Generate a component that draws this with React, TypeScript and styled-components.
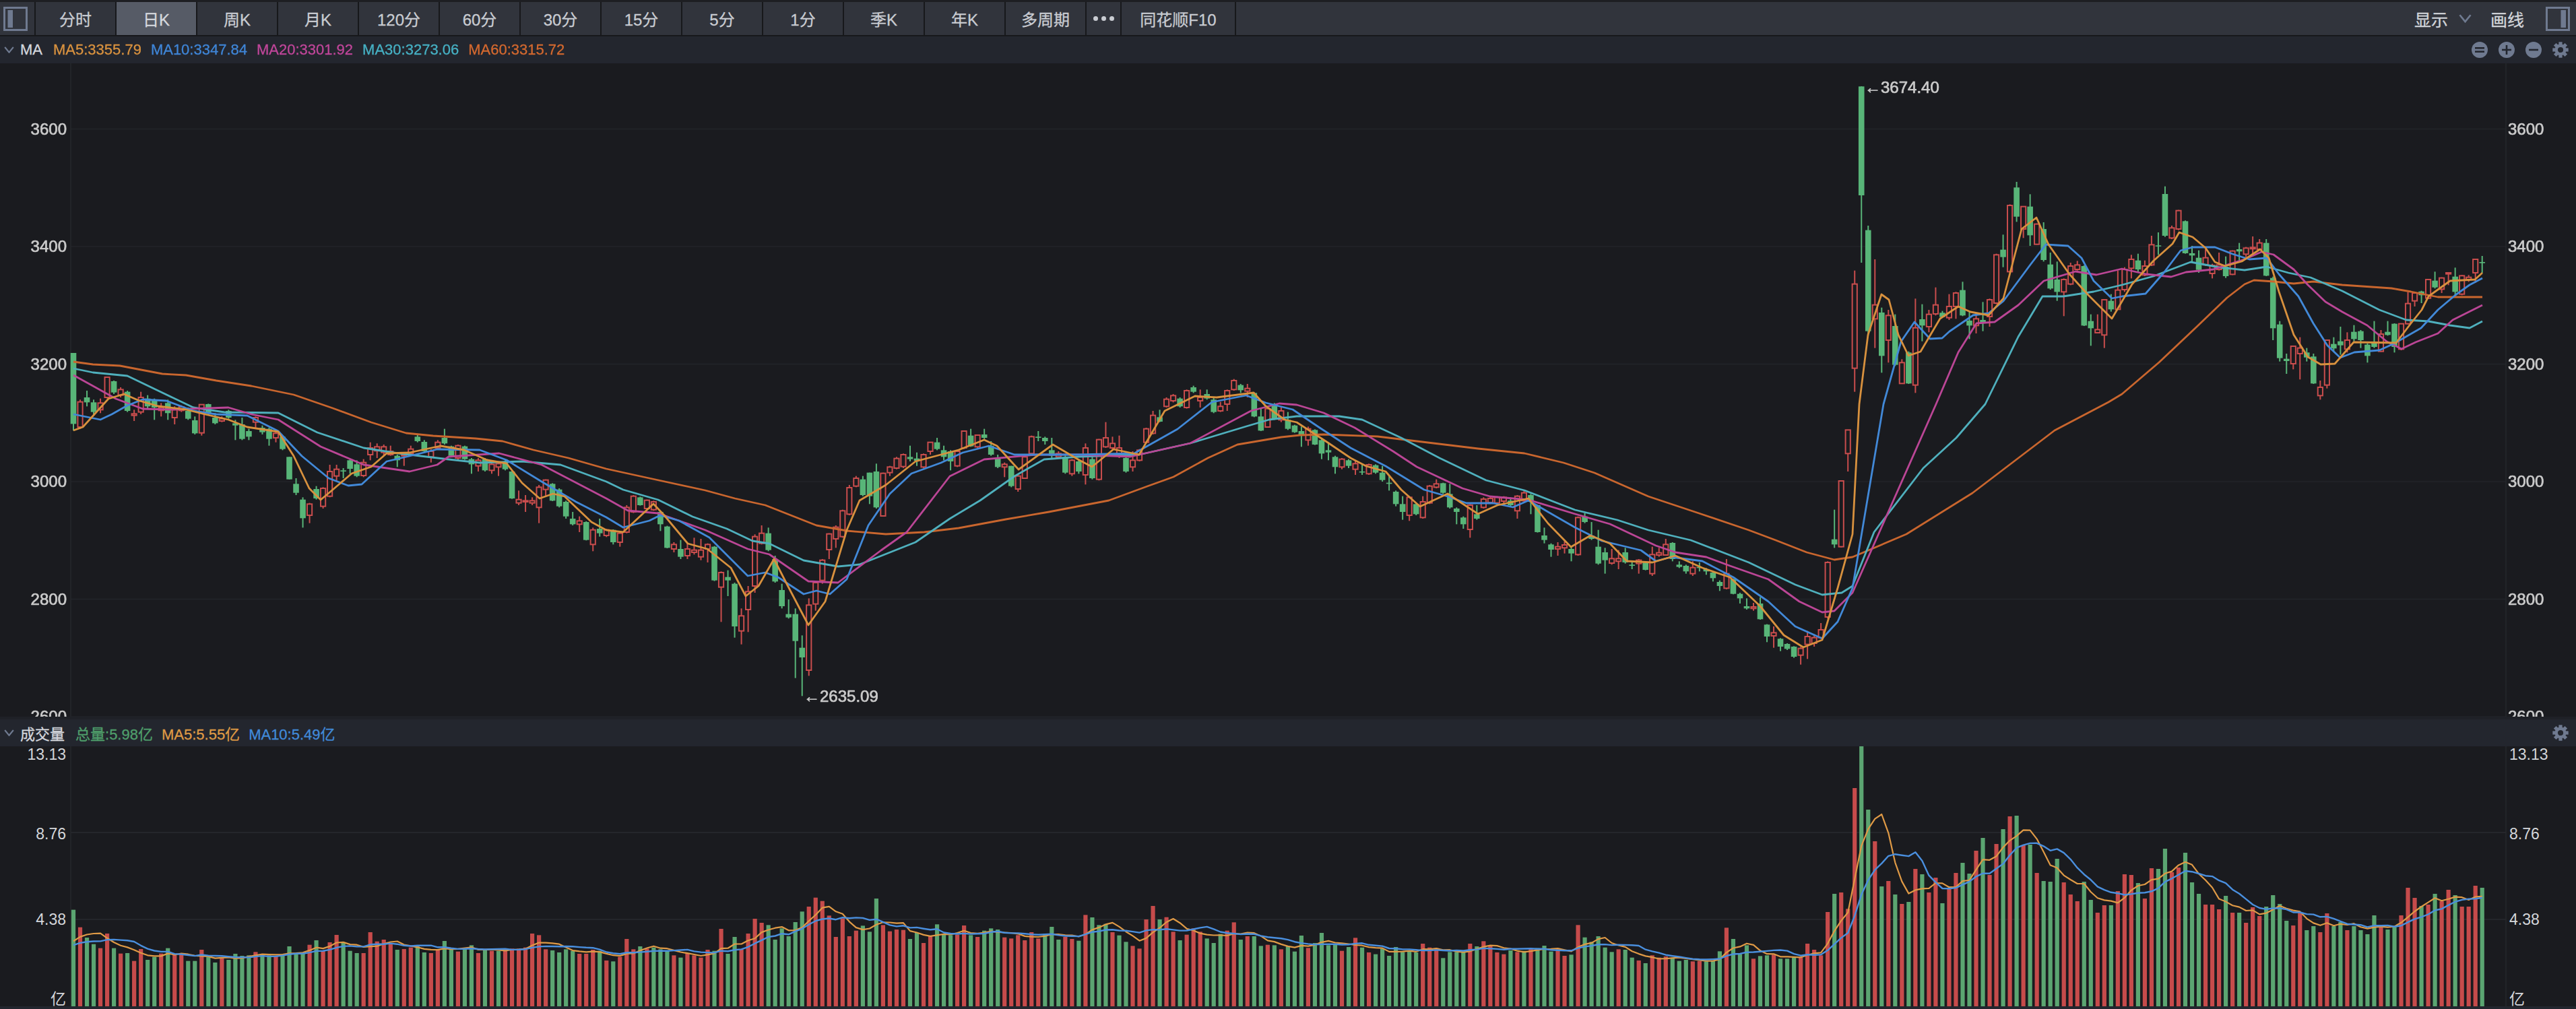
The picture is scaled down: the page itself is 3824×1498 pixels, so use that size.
import React from "react";
import styled, { createGlobalStyle } from "styled-components";

const FONT = `"Liberation Sans", "Noto Sans CJK SC", sans-serif`;
const BG = "#1a1b1f";
const BAR = "#23262e";
const ICON = "#6f7a90";

const RED = "#c94d4d";
const GREEN = "#58b578";
const VOL_RED = "#c64b4b";
const VOL_GREEN = "#5ba571";

// candles, read group by group: [up, bodyTop, bodyBottom, wickTop, wickBottom]
type Row = number[];
const group = (offset: number, rows: Row[]) =>
  rows.map(([up, t, b, wt, wb]) => ({
    up: up === 1,
    top: offset + t / 3,
    bottom: offset + b / 3,
    high: offset + wt / 3,
    low: offset + wb / 3,
  }));

const candles = [
  ...group(480, [
    [0,132,448,132,478],[1,350,462,340,470],[0,330,352,300,370],[0,352,395,340,410],[1,355,385,335,400],
    [1,240,330,240,335],[0,258,308,255,315],[1,295,320,285,330],[0,305,390,300,395],[1,403,410,385,435],
    [1,330,395,305,405],[0,335,370,320,380],[0,345,375,335,430],[1,375,388,355,415],[0,355,400,340,430],
    [1,385,420,370,450],[1,372,388,365,395],[0,390,425,375,430],[0,432,490,415,495],[1,362,488,360,500],
    [0,360,400,358,405],[0,420,445,400,450],[1,425,435,415,440],[0,390,420,385,425],[0,445,455,430,520],
    [0,450,515,420,520],[0,480,505,470,520],[1,420,440,415,470],[0,465,485,455,495],[0,470,515,465,545],
    [1,490,510,480,530],[0,505,560,500,565],[0,595,695,595,695],[0,715,755,690,765],[0,785,868,775,910],
    [1,805,855,800,890],[0,738,780,725,785],[1,735,815,730,825],[1,660,770,630,775],[1,650,680,630,700],
    [0,655,660,645,690],[0,610,648,605,670],[0,628,680,610,685],[1,620,678,605,685],[1,555,585,530,610],
    [1,550,568,535,600],[1,550,575,540,590],[1,570,585,545,590],[0,590,610,585,640],[1,585,590,580,635],
    [1,560,580,545,590],[0,505,525,495,530],[0,528,570,520,575],[1,570,595,560,620],[1,530,555,520,560],
    [0,510,535,470,540],[0,548,590,545,592],[1,545,600,540,610],[0,548,605,545,608],[0,605,628,600,670],
    [1,610,635,600,660],[0,605,655,600,660],[1,628,655,615,670],[1,625,640,620,680],[0,620,650,610,655],
    [0,660,780,658,782],[1,785,800,745,810],[1,790,795,765,840],[1,790,800,775,810],[1,730,820,720,890],
    [1,698,740,695,770],[0,715,790,712,792],[0,740,815,735,820],[0,795,860,790,870],[0,870,895,840,900],
    [1,880,895,860,930],[0,885,965,882,967],[1,920,985,910,1015],[0,915,935,870,950],
  ]),
  ...group(560, [
    [1,680,705,675,712],[0,680,735,678,745],[1,695,735,690,755],[1,580,690,570,695],[1,530,600,525,605],
    [0,535,570,532,572],[1,548,585,545,590],[1,555,590,550,595],[0,600,655,595,685],[0,665,760,662,762],
    [1,745,765,735,780],[0,765,800,725,810],[1,765,795,740,810],[1,770,780,715,790],[1,770,800,720,815],
    [1,745,765,740,825],[0,755,905,752,908],[1,870,935,865,1090],[0,890,905,860,975],[0,920,1110,915,1160],
    [1,1063,1130,1030,1190],[1,955,1035,930,1135],[1,710,930,700,960],[1,695,740,660,745],[0,695,770,670,775],
    [0,810,910,795,915],[0,948,1020,920,1030],[0,1055,1070,990,1075],[0,1055,1175,1030,1340],[0,1205,1248,1150,1420],
    [1,1015,1305,985,1330],[1,915,1010,910,1040],[1,815,905,810,920],[1,698,768,695,810],[1,668,720,660,760],
    [1,595,710,590,715],[1,492,610,480,615],[1,450,485,440,490],[0,455,525,440,530],[0,425,530,425,565],
    [0,420,580,385,585],[1,428,618,425,620],[1,400,425,395,440],[1,362,405,355,410],[1,345,398,340,405],
    [0,355,365,305,375],[0,362,372,335,395],[1,345,400,340,405],[1,290,330,290,345],[0,290,320,270,325],
    [0,325,355,305,370],[0,330,375,325,415],[1,330,395,325,400],[1,240,315,240,320],[0,260,308,230,310],
    [1,258,310,255,315],[0,255,270,230,275],[0,305,345,285,350],[0,358,400,345,405],[1,388,400,380,445],
    [0,395,485,395,490],[1,440,498,435,510],[1,355,450,350,450],[1,265,340,260,345],[0,265,270,240,285],
    [0,270,285,265,300],[0,325,350,270,360],[1,340,355,330,360],[0,355,425,345,430],[1,370,430,365,440],
    [0,375,420,365,430],[1,315,435,295,478],[0,365,450,340,455],[1,278,455,275,460],[1,270,310,200,315],
    [1,295,315,265,325],[1,315,345,260,360],[0,360,420,350,425],[1,370,400,330,420],[1,325,370,320,375],
    [1,230,290,225,295],[1,170,250,150,255],[0,178,198,145,200],[1,98,130,90,135],[1,82,105,75,112],
    [0,95,130,90,135],[1,60,135,55,140],[0,45,65,38,70],[1,90,105,55,135],[0,75,95,55,100],
    [0,100,155,90,160],[1,130,150,110,155],[1,60,120,55,150],[1,15,55,8,60],[0,35,58,30,70],
    [1,50,62,30,90],[0,70,175,68,178],[0,175,238,140,240],[1,140,222,135,225],[0,120,185,115,190],
  ]),
  ...group(540, [
    [1,210,250,195,260],[0,250,290,215,295],[0,275,305,272,308],[0,300,320,280,370],[1,290,340,280,365],
    [0,295,360,292,362],[0,340,400,330,425],[0,385,395,355,430],[0,415,460,410,490],[1,425,460,420,470],
    [0,430,455,425,465],[1,445,470,430,495],[0,480,483,450,495],[1,450,490,445,495],[0,452,485,448,490],
    [0,485,518,455,525],[0,530,535,495,565],[0,570,625,565,635],[0,625,660,590,695],[1,595,675,590,700],
    [0,625,670,620,675],[1,615,685,590,690],[1,545,620,540,625],[1,535,550,515,555],[0,532,575,530,580],
    [0,580,640,535,645],[0,645,660,640,715],[0,685,715,680,735],[1,630,738,625,775],[0,670,690,630,695],
    [1,603,640,595,645],[1,600,618,590,625],[1,595,620,590,625],[1,595,612,590,630],[0,610,630,595,635],
    [1,590,655,585,690],[1,575,610,565,615],[0,585,610,580,670],[0,630,750,628,752],[0,765,785,730,800],
    [0,805,828,800,860],[1,815,825,795,855],[1,807,820,790,845],[0,825,845,810,880],[1,685,850,680,855],
    [0,680,705,665,710],[0,765,780,705,785],[0,815,890,740,895],[0,840,875,820,935],[1,868,888,825,895],
    [1,868,880,830,915],[0,840,885,820,890],[0,895,900,880,915],[1,875,890,870,935],[0,885,918,880,920],
    [1,850,935,815,945],[1,842,852,820,860],[1,805,852,780,855],[0,798,870,795,880],[0,895,905,880,910],
    [0,900,925,895,935],[1,908,935,880,945],[0,905,910,885,925],[0,915,925,910,940],[0,930,955,925,970],
    [0,972,990,965,1012],[1,935,1000,870,1005],[0,960,1025,958,1027],[0,1025,1045,1020,1068],[0,1080,1090,1045,1095],
    [1,1083,1090,1065,1100],[0,1068,1138,1040,1140],[0,1162,1215,1160,1240],[1,1198,1212,1170,1265],[0,1225,1260,1222,1280],
    [0,1248,1270,1245,1275],[0,1260,1305,1258,1310],[1,1268,1298,1262,1340],[1,1215,1250,1190,1315],[1,1220,1245,1205,1260],
    [1,1185,1220,1155,1225],[1,885,1128,880,1135],[0,782,805,650,820],[1,522,815,520,818],[1,295,400,295,480],
  ]),
  ...group(100, [
    [1,965,1340,905,1445],[0,85,570,85,870],[0,725,1175,705,1195],[1,1058,1120,855,1250],[0,1092,1285,1070,1360],
    [1,1105,1215,1080,1315],[0,1152,1325,1100,1330],[1,1315,1408,1300,1410],[0,1270,1408,1265,1410],[1,1160,1415,1030,1450],
    [0,1122,1150,1055,1220],[1,1100,1155,1080,1180],[1,1058,1098,980,1105],[0,1093,1112,1085,1115],[1,1065,1115,1010,1125],
    [1,1005,1065,1000,1120],[0,992,1105,955,1108],[0,1128,1150,1085,1210],[1,1120,1150,1100,1185],[0,1125,1140,1045,1175],
    [1,1035,1110,1030,1155],[1,835,1050,830,1055],[0,812,845,745,890],[1,615,910,610,915],[0,535,665,510,688],
    [1,620,720,618,760],[0,620,748,565,795],[1,698,788,695,790],[0,720,858,690,865],[0,878,985,825,990],
    [0,945,1000,865,1040],[1,945,1000,940,1108],[1,885,965,870,970],[1,880,900,862,905],[0,885,1150,882,1152],
    [0,1130,1162,1100,1240],[1,1168,1182,1100,1185],[1,1035,1192,1032,1250],[0,1040,1078,1010,1088],[1,992,1078,905,1080],
    [1,900,990,890,1000],[1,855,895,835,940],[0,860,900,830,915],[1,885,925,860,930],[1,790,880,750,885],
    [0,793,797,735,835],
  ]),
  ...group(290, [
    [0,-6,180,-40,185],[1,145,190,135,195],[1,68,150,65,155],[0,115,258,112,260],[0,258,268,225,300],
    [0,278,332,245,345],[1,278,310,240,315],[1,312,348,305,370],[1,310,330,255,335],[0,318,360,272,368],
    [1,248,352,245,355],[0,240,250,212,290],[1,235,262,230,275],[1,232,238,183,258],[1,212,240,195,245],
    [0,212,358,195,360],[0,368,592,362,645],[0,575,725,560,740],[0,728,738,705,795],[1,672,750,670,775],
    [1,680,705,632,820],[0,700,722,680,740],[0,718,838,705,840],[1,855,892,825,910],[1,645,845,642,860],
    [0,662,682,632,695],[0,650,668,585,710],[1,645,685,610,700],[0,608,640,578,650],[0,605,645,600,680],
    [0,665,715,660,745],[0,658,675,560,680],[1,618,695,600,697],[0,608,622,560,625],[0,572,675,570,700],
    [1,572,685,570,690],[1,482,572,430,575],[1,435,470,432,495],[0,428,445,425,480],[1,375,458,372,462],
    [0,380,410,340,415],[1,368,418,365,435],[1,345,350,345,400],[0,362,430,322,450],[1,358,440,355,445],
    [1,365,375,355,385],[1,285,345,282,390],[0,297,302,270,345],
  ]),
];

// price moving averages, as read from the chart
const MA_LINES = [
  {
    color: "#c9662e",
    points: "109,537 138,541 178,543 241,555 276,557 321,565 373,573 436,586 494,606 551,627 603,643 643,647 706,651 746,655 792,668 844,680 900,696 964,710 1047,728 1091,740 1136,750 1174,765 1212,780 1257,788 1315,793 1372,790 1423,784 1493,771 1557,760 1646,743 1703,722 1742,708 1793,680 1837,660 1902,649 1930,646 1965,645 2045,648 2103,655 2194,666 2263,673 2321,687 2367,702 2447,737 2522,762 2596,787 2636,802 2682,820 2723,831 2750,827 2830,793 2928,732 3050,639 3130,597 3150,585 3205,538 3259,487 3306,442 3332,422 3346,416 3375,418 3405,421 3434,418 3477,423 3550,428 3579,433 3619,441 3685,441",
  },
  {
    color: "#4fb0bd",
    points: "109,547 138,553 189,558 241,583 287,605 333,612 413,613 471,642 540,665 591,673 666,682 712,687 775,685 832,690 900,715 925,727 977,742 1028,767 1079,785 1117,803 1142,807 1193,832 1244,841 1276,838 1359,805 1410,770 1455,743 1506,707 1550,682 1602,678 1691,675 1767,658 1850,633 1884,623 1925,618 1988,618 2022,623 2080,650 2137,680 2206,713 2263,728 2338,757 2401,772 2447,787 2510,802 2596,835 2665,868 2705,883 2734,880 2750,870 2782,790 2855,695 2904,650 2947,600 2996,500 3032,440 3063,440 3108,433 3150,423 3197,410 3223,400 3252,389 3295,397 3332,401 3365,396 3397,405 3430,412 3477,432 3532,460 3572,475 3605,477 3637,483 3666,487 3685,477",
  },
  {
    color: "#bb4696",
    points: "109,557 138,573 172,592 212,607 253,608 339,605 373,615 413,623 476,663 540,690 608,700 649,690 666,678 741,673 804,690 900,740 932,758 977,762 1047,787 1110,815 1142,823 1200,863 1244,865 1308,817 1346,790 1410,707 1461,682 1538,675 1602,675 1678,678 1767,658 1857,610 1899,599 1925,601 1965,613 2011,635 2068,670 2103,693 2171,725 2212,737 2269,742 2338,763 2390,778 2458,810 2487,820 2533,827 2568,840 2625,860 2671,893 2705,909 2723,907 2750,880 2874,600 2907,523 2934,480 2961,478 2996,453 3034,417 3081,403 3112,408 3150,399 3186,407 3223,411 3245,404 3285,400 3332,385 3357,374 3375,378 3405,400 3426,423 3452,448 3477,463 3514,483 3543,507 3565,518 3586,508 3619,495 3641,475 3685,453",
  },
  {
    color: "#4289d8",
    points: "109,615 149,623 166,615 189,602 212,593 247,595 287,610 321,615 367,617 413,640 448,677 488,710 517,721 537,719 574,685 608,677 649,667 712,668 752,683 804,715 855,745 900,768 925,783 964,773 980,765 1008,773 1053,798 1110,855 1136,850 1155,857 1193,882 1212,877 1232,882 1257,860 1289,780 1321,733 1353,703 1397,687 1429,672 1468,662 1506,675 1602,675 1684,673 1748,637 1799,597 1850,587 1879,598 1919,608 1959,635 2005,665 2057,692 2114,727 2149,737 2177,747 2217,747 2246,753 2269,743 2298,760 2338,783 2378,803 2436,817 2458,833 2481,827 2527,833 2573,857 2625,893 2665,930 2705,948 2728,923 2750,873 2796,600 2822,507 2842,478 2865,503 2883,502 2894,492 2929,468 2952,465 2974,447 3014,393 3037,363 3070,365 3090,383 3108,417 3135,443 3150,440 3185,436 3212,405 3237,372 3255,367 3288,367 3314,377 3339,385 3365,383 3383,407 3412,440 3434,480 3455,513 3474,531 3495,523 3532,520 3554,510 3594,487 3619,460 3645,438 3666,423 3685,413",
  },
  {
    color: "#d8913e",
    points: "109,639 123,634 161,592 184,585 207,595 235,603 276,608 304,615 339,623 367,634 413,641 436,677 459,725 476,742 494,727 522,703 551,693 574,673 608,672 654,662 689,668 723,683 752,688 775,717 801,740 821,733 838,737 878,775 900,787 925,790 970,748 986,765 1021,807 1050,815 1085,843 1107,885 1126,870 1149,830 1168,867 1200,928 1225,893 1257,787 1276,743 1315,720 1359,685 1423,668 1461,653 1480,662 1512,697 1563,660 1602,683 1621,693 1653,667 1691,675 1729,610 1774,588 1806,590 1861,583 1879,603 1907,623 1925,627 1971,657 2005,680 2028,692 2057,700 2080,727 2108,752 2149,733 2194,763 2223,750 2269,740 2298,777 2332,812 2361,795 2390,807 2415,833 2453,835 2487,825 2527,843 2568,857 2613,900 2648,943 2677,961 2705,950 2728,873 2750,793 2760,600 2773,497 2793,437 2804,445 2818,497 2833,528 2851,522 2880,473 2907,455 2925,463 2952,468 2974,443 3001,340 3023,323 3041,363 3072,407 3099,437 3135,473 3165,422 3197,387 3225,362 3235,345 3255,352 3274,368 3288,389 3303,395 3328,388 3355,370 3368,383 3383,433 3405,497 3426,530 3445,541 3466,540 3494,508 3557,509 3579,480 3595,460 3605,440 3637,417 3674,415 3685,405",
  },
];

// volume bar tops, negative for a green bar
const volGroup = (offset: number, vals: number[]) =>
  vals.map((v) => ({ up: v > 0, top: offset + Math.abs(v) / 3 }));

const volumes = [
  ...volGroup(1040, [
    -932,1010,-1056,-1085,1103,1038,-1103,1127,-1125,1160,1107,-1155,-1142,1127,-1103,1133,1127,-1160,-1160,1110,
    -1142,-1167,1148,-1155,-1128,-1137,-1135,1120,-1130,-1135,1140,-1130,-1095,-1125,-1125,1088,-1068,1115,1077,1044,
    -1080,-1115,-1125,1125,1032,1073,1065,1083,-1110,1107,1100,-1095,-1122,1125,1110,-1071,-1110,1118,-1105,
  ]),
  ...volGroup(1290, [
    -340,375,-360,365,-365,355,355,355,350,288,295,358,-363,-372,-358,-365,378,378,360,-365,
    408,-412,392,312,358,-345,355,-350,-358,-365,385,-395,375,385,395,360,-365,267,-378,-303,
    358,288,222,240,-250,-315,-265,-300,-237,-190,168,128,143,208,303,220,300,275,-253,-280,
    -132,250,278,270,272,-312,-285,330,300,-247,-290,-295,293,252,-295,303,-275,-265,-270,305,
    310,295,318,282,310,-290,-258,-315,303,312,-320,205,-216,-250,-245,282,-296,-325,343,355,
    225,165,-225,215,280,-318,293,265,280,-310,-330,-290,275,238,-315,300,-300,-343,338,-340,
    358,-345,-368,-297,352,-330,-285,-340,-335,365,-348,307,-350,372,-380,-355,-387,-348,-370,-365,
    -372,333,350,353,-397,-370,-370,-365,333,-345,322,340,372,380,-363,370,-365,355,-353,-342,
    -368,355,387,-382,250,-305,-325,-300,-350,-370,358,-360,-395,408,-420,385,395,390,-395,-410,
    -405,412,410,-412,-410,-367,262,-312,-380,-340,
  ]),
  ...volGroup(1080, [
    1030,-1018,-1015,1012,-1030,-1030,-1025,1022,963,990,1015,822,-741,735,808,270,-84,-366,507,-708,
    684,-744,786,-777,630,-654,735,669,-783,717,648,-603,-651,549,-492,657,519,-453,396,-393,
    525,-522,648,-684,-687,-585,690,744,774,-687,-768,825,792,-792,729,654,657,-693,762,627,
  ]),
  ...volGroup(1040, [
    -750,-660,765,744,-678,-810,-861,909,909,930,-870,945,-945,990,921,960,-918,-867,-906,-981,
    1002,945,-1023,-1005,1032,948,-1005,-987,1023,-1005,-1023,-1041,-957,1008,-1020,-1005,957,834,879,-915,
    909,-861,894,843,-867,918,918,825,-834,
  ]),
];

const FIRST_X = 109;
const STEP = 10.016;
const VOL_BOTTOM = 1494;
const barX = (i: number) => FIRST_X + STEP * i;

// moving average of the bar heights, the days before the chart taken at 85px
const volAverage = (days: number) =>
  volumes
    .map((_, i) => {
      let sum = 0;
      for (let k = i - days + 1; k <= i; k++) {
        sum += k < 0 ? 85 : VOL_BOTTOM - volumes[k].top;
      }
      return `${barX(i).toFixed(1)},${(VOL_BOTTOM - sum / days).toFixed(1)}`;
    })
    .join(" ");

const GlobalStyle = createGlobalStyle`
  html, body {
    margin: 0;
    padding: 0;
    background: ${BG};
  }
`;

const Page = styled.div`
  width: 3824px;
  height: 1498px;
  display: flex;
  flex-direction: column;
  overflow: hidden;
  background: ${BG};
  font-family: ${FONT};
  -webkit-text-stroke: 0.3px;
`;

const Toolbar = styled.div`
  height: 49px;
  flex: none;
  display: flex;
  align-items: stretch;
  border-top: 3px solid #1d1e22;
  border-bottom: 2px solid #17181b;
  background: #31343c;
`;

const IconCell = styled.div`
  width: 53px;
  flex: none;
  display: flex;
  align-items: center;
  padding-left: 5px;
  box-sizing: border-box;
  border-right: 2px solid #17181b;
`;

const PeriodButton = styled.div<{ $active?: boolean; $width?: number }>`
  width: ${(p) => p.$width ?? 120}px;
  flex: none;
  box-sizing: border-box;
  display: flex;
  align-items: center;
  justify-content: center;
  gap: 5px;
  border-right: 2px solid #17181b;
  font-size: 24px;
  color: ${(p) => (p.$active ? "#d6d9de" : "#c9ccd2")};
  background: ${(p) => (p.$active ? "#565b66" : "#31343c")};
`;

const MoreDot = styled.span`
  width: 7px;
  height: 7px;
  border-radius: 50%;
  background: #c9ccd2;
`;

const ToolbarRight = styled.div`
  margin-left: auto;
  display: flex;
  align-items: center;
  padding-right: 9px;
  font-size: 25px;
  color: #d2d5da;
`;

const DisplayLabel = styled.span`
  margin-right: 16px;
`;

const DrawLabel = styled.span`
  margin: 0 32px 0 28px;
`;

const LegendBar = styled.div`
  height: 40px;
  flex: none;
  display: flex;
  align-items: center;
  background: ${BAR};
  padding: 0 11px 0 6px;
  font-size: 22px;
`;

const Title = styled.span`
  color: #d5d8de;
  margin-left: 9px;
  margin-right: 16px;
`;

const MaValue = styled.span<{ $color: string }>`
  color: ${(p) => p.$color};
  margin-right: 14px;
  filter: blur(0.5px);
`;

const VolValue = styled.span<{ $color: string }>`
  color: ${(p) => p.$color};
  margin-right: 13px;
`;

const LegendTools = styled.div`
  margin-left: auto;
  display: flex;
  align-items: center;
  gap: 16px;
`;

const PricePane = styled.div`
  height: 970px;
  flex: none;
  overflow: hidden;
  background: ${BG};

  svg {
    display: block;
    filter: blur(0.7px);
  }
`;

const Seam = styled.div`
  height: 4px;
  flex: none;
  background: #1f2127;
`;

const VolumePane = styled.div`
  height: 386px;
  flex: none;
  overflow: hidden;
  background: ${BG};

  svg {
    display: block;
  }
`;

const Foot = styled.div`
  height: 4px;
  flex: none;
  background: ${BAR};
`;

const AxisText = styled.text`
  font-family: ${FONT};
  font-size: 24px;
  fill: #cbcbcb;
  stroke: #cbcbcb;
  stroke-width: 0.7px;
`;

const VolAxisText = styled.text`
  font-family: ${FONT};
  font-size: 23px;
  fill: #d4d6da;
`;

const Chevron = ({ width = 15 }: { width?: number }) => (
  <svg width={width} height={width * 0.65} viewBox="0 0 15 10" fill="none">
    <polyline points="1,1 7.5,9 14,1" stroke={ICON} strokeWidth="2.2" />
  </svg>
);

const PanelIcon = ({ side }: { side: "left" | "right" }) => (
  <svg width="36" height="36" viewBox="0 0 36 36">
    <rect x="1.5" y="1.5" width="33" height="33" fill="none" stroke={ICON} strokeWidth="3" />
    <rect x={side === "left" ? 6.5 : 22.5} y="5" width="7.5" height="26" fill={ICON} />
  </svg>
);

const RoundIcon = ({ glyph }: { glyph: "equal" | "plus" | "minus" }) => (
  <svg width="24" height="24" viewBox="0 0 24 24">
    <circle cx="12" cy="12" r="12" fill={ICON} />
    {glyph === "equal" && (
      <>
        <rect x="5" y="8" width="14" height="2.6" fill={BAR} />
        <rect x="5" y="13.4" width="14" height="2.6" fill={BAR} />
      </>
    )}
    {glyph !== "equal" && <rect x="5" y="10.7" width="14" height="2.6" fill={BAR} />}
    {glyph === "plus" && <rect x="10.7" y="5" width="2.6" height="14" fill={BAR} />}
  </svg>
);

const Gear = () => (
  <svg width="24" height="24" viewBox="0 0 24 24">
    {[0, 45, 90, 135, 180, 225, 270, 315].map((a) => (
      <rect key={a} x="9.4" y="0.3" width="5.2" height="6" fill={ICON} transform={`rotate(${a} 12 12)`} />
    ))}
    <circle cx="12" cy="12" r="6.3" fill="none" stroke={ICON} strokeWidth="4.4" />
  </svg>
);

const PRICE_TICKS = [3600, 3400, 3200, 3000, 2800, 2600];
const priceY = (p: number) => 715 - (p - 3000) * 0.8725;

const PERIODS = ["分时", "日K", "周K", "月K", "120分", "60分", "30分", "15分", "5分", "1分", "季K", "年K", "多周期"];

const PriceChart = () => (
  <svg width="3824" height="970" viewBox="0 94 3824 970">
    {PRICE_TICKS.map((p) => (
      <line key={p} x1="105" x2="3720" y1={priceY(p)} y2={priceY(p)} stroke="#23252a" strokeWidth="1.5" />
    ))}
    <line x1="105" x2="105" y1="94" y2="1064" stroke="#26282d" strokeWidth="1.5" />
    <line x1="3720" x2="3720" y1="94" y2="1064" stroke="#26282d" strokeWidth="1.5" />
    {PRICE_TICKS.map((p) => (
      <React.Fragment key={p}>
        <AxisText x="99" y={priceY(p) + 8} textAnchor="end">
          {p}
        </AxisText>
        <AxisText x="3723" y={priceY(p) + 8}>
          {p}
        </AxisText>
      </React.Fragment>
    ))}
    {candles.map((c, i) => {
      const x = barX(i);
      const color = c.up ? RED : GREEN;
      const height = Math.max(c.bottom - c.top, 1.5);
      return (
        <g key={i}>
          <line x1={x} x2={x} y1={c.high} y2={c.low} stroke={color} strokeWidth="2" />
          {c.up ? (
            <rect x={x - 3.6} y={c.top} width={7.2} height={height} fill={BG} stroke={color} strokeWidth="2" />
          ) : (
            <rect x={x - 4.3} y={c.top} width={8.6} height={height} fill={color} />
          )}
        </g>
      );
    })}
    {MA_LINES.map((m) => (
      <polyline key={m.color} points={m.points} fill="none" stroke={m.color} strokeWidth="2.8" strokeLinejoin="round" />
    ))}
    <AxisText x="2768" y="138">
      ←3674.40
    </AxisText>
    <AxisText x="1193" y="1042">
      ←2635.09
    </AxisText>
  </svg>
);

const VOL_TICKS = [
  { label: "13.13", y: 1128 },
  { label: "8.76", y: 1246 },
  { label: "4.38", y: 1373 },
  { label: "亿", y: 1491 },
];

const VolumeChart = () => (
  <svg width="3824" height="386" viewBox="0 1108 3824 386">
    {[1236, 1365].map((y) => (
      <line key={y} x1="105" x2="3720" y1={y} y2={y} stroke="#292b30" strokeWidth="1.5" />
    ))}
    <line x1="105" x2="105" y1="1108" y2="1494" stroke="#26282d" strokeWidth="1.5" />
    <line x1="3720" x2="3720" y1="1108" y2="1494" stroke="#26282d" strokeWidth="1.5" />
    {VOL_TICKS.map((t) => (
      <React.Fragment key={t.label}>
        <VolAxisText x="98" y={t.y} textAnchor="end">
          {t.label}
        </VolAxisText>
        <VolAxisText x="3725" y={t.y}>
          {t.label}
        </VolAxisText>
      </React.Fragment>
    ))}
    {volumes.map((v, i) => (
      <rect
        key={i}
        x={barX(i) - 3.1}
        y={v.top}
        width={6.2}
        height={VOL_BOTTOM - v.top}
        fill={v.up ? VOL_RED : VOL_GREEN}
      />
    ))}
    <polyline points={volAverage(5)} fill="none" stroke="#df9a46" strokeWidth="2.2" strokeLinejoin="round" />
    <polyline points={volAverage(10)} fill="none" stroke="#4a8fde" strokeWidth="2.4" strokeLinejoin="round" />
  </svg>
);

export default function App() {
  return (
    <Page>
      <GlobalStyle />
      <Toolbar>
        <IconCell>
          <PanelIcon side="left" />
        </IconCell>
        {PERIODS.map((p) => (
          <PeriodButton key={p} $active={p === "日K"}>
            {p}
          </PeriodButton>
        ))}
        <PeriodButton $width={52}>
          <MoreDot />
          <MoreDot />
          <MoreDot />
        </PeriodButton>
        <PeriodButton $width={170}>同花顺F10</PeriodButton>
        <ToolbarRight>
          <DisplayLabel>显示</DisplayLabel>
          <Chevron width={19} />
          <DrawLabel>画线</DrawLabel>
          <PanelIcon side="right" />
        </ToolbarRight>
      </Toolbar>
      <LegendBar>
        <Chevron />
        <Title>MA</Title>
        <MaValue $color="#d9923f">MA5:3355.79</MaValue>
        <MaValue $color="#3f86d8">MA10:3347.84</MaValue>
        <MaValue $color="#c0469a">MA20:3301.92</MaValue>
        <MaValue $color="#46b1c4">MA30:3273.06</MaValue>
        <MaValue $color="#d4692f">MA60:3315.72</MaValue>
        <LegendTools>
          <RoundIcon glyph="equal" />
          <RoundIcon glyph="plus" />
          <RoundIcon glyph="minus" />
          <Gear />
        </LegendTools>
      </LegendBar>
      <PricePane>
        <PriceChart />
      </PricePane>
      <Seam />
      <LegendBar>
        <Chevron />
        <Title>成交量</Title>
        <VolValue $color="#4f9f6b">总量:5.98亿</VolValue>
        <VolValue $color="#df9a45">MA5:5.55亿</VolValue>
        <VolValue $color="#418ad9">MA10:5.49亿</VolValue>
        <LegendTools>
          <Gear />
        </LegendTools>
      </LegendBar>
      <VolumePane>
        <VolumeChart />
      </VolumePane>
      <Foot />
    </Page>
  );
}
